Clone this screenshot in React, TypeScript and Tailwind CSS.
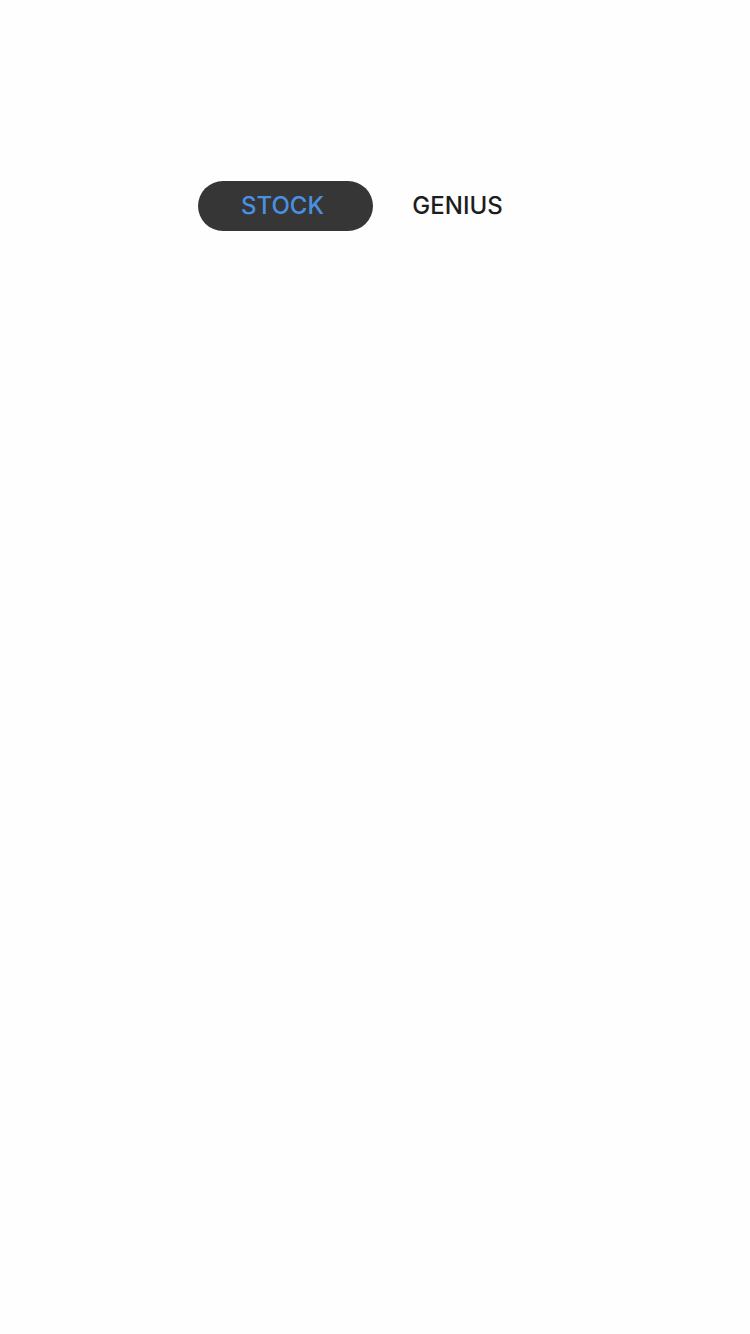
import { useState } from "react";

const tabs = ["STOCK", "GENIUS"];

export default function App() {
  const [active, setActive] = useState("STOCK");

  return (
    <main className="min-h-screen bg-[#fefefe] pt-[181px] font-['Inter','Liberation_Sans',sans-serif]">
      <div role="tablist" className="flex justify-center pr-1">
        {tabs.map((tab) => (
          <button
            key={tab}
            type="button"
            role="tab"
            aria-selected={active === tab}
            onClick={() => setActive(tab)}
            className={`h-[50px] w-[175px] rounded-full pr-1.5 text-center text-2xl font-medium ${
              active === tab ? "bg-[#363636] text-[#4a90e2]" : "text-[#1d1d1d]"
            }`}
          >
            {tab}
          </button>
        ))}
      </div>
    </main>
  );
}
